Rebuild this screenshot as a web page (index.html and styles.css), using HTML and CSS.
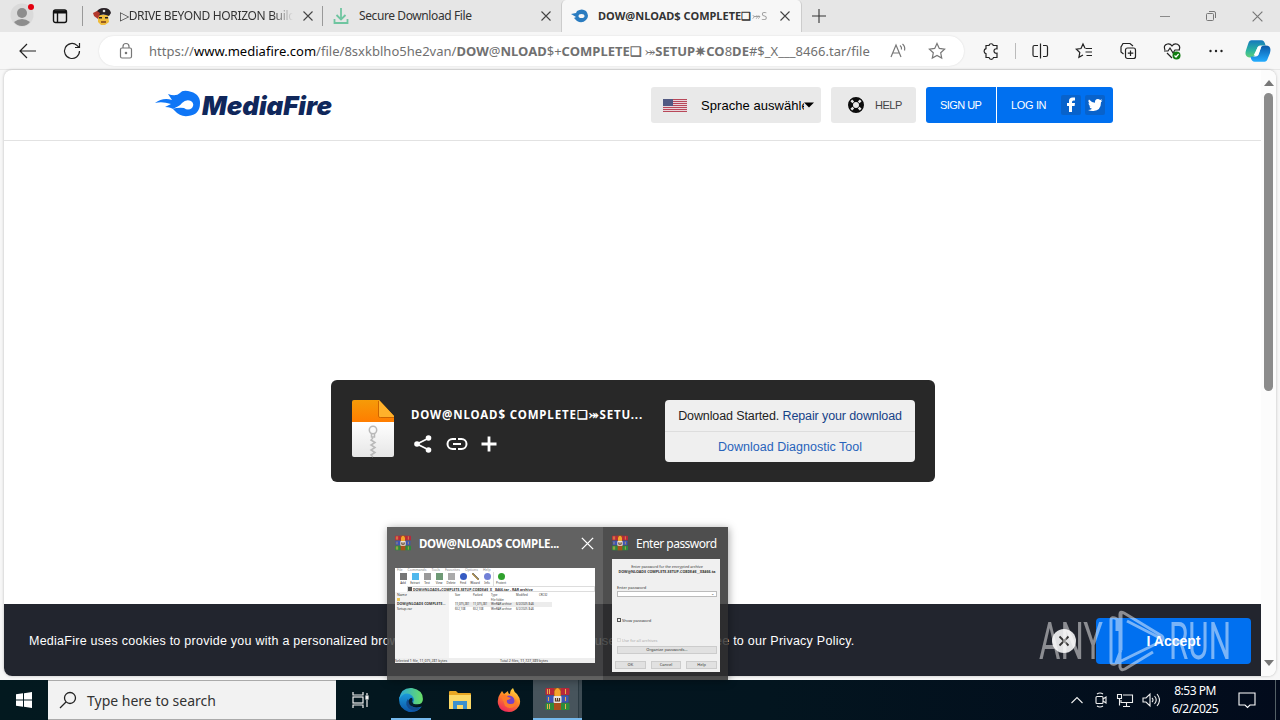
FILE: index.html
```html
<!DOCTYPE html>
<html lang="en">
<head>
    <meta charset="UTF-8">
    <meta name="viewport" content="width=device-width, initial-scale=1.0">
    <title>MediaFire</title>
    <link rel="stylesheet" href="styles.css">
</head>
<body>
    <!-- Shared icons -->
    <svg class="sprite" width="0" height="0">
        <symbol id="winrar" viewBox="0 0 24 24">
            <rect x="0" y="1" width="24" height="7" rx="1" fill="#b8283b"/>
            <rect x="1" y="8.500" width="22" height="7" rx="1" fill="#3d55b5"/>
            <rect x="0" y="16" width="24" height="7" rx="1" fill="#2c8b3c"/>
            <path d="M2 2v5M4 2v5M20 2v5M3 10v4M20 10v4M2 17v5M4 17v5M20 17v5" stroke="#e8b04a" stroke-width="1"/>
            <rect x="8.500" y="1" width="7" height="22" fill="#a9501c"/>
            <path d="M9 9V4q3-6 6 0v5" fill="#f5a52a"/>
            <rect x="8" y="9" width="8" height="7" rx="1" fill="#e9e4dc"/>
            <path d="M10 11v3h4v-3M12 11v3" fill="none" stroke="#5a3a22" stroke-width="1.2"/>
        </symbol>
        <symbol id="close" viewBox="0 0 12 12">
            <path d="M1.500 1.500l9 9M10.500 1.500l-9 9" fill="none" stroke="currentColor" stroke-width="1.1"/>
        </symbol>
    </svg>

    <div class="browser">
        <div class="tabs">
            <div class="profile">
                <svg width="24" height="28" viewBox="0 0 24 28">
                    <circle cx="12" cy="15" r="11.500" fill="#dadada"/>
                    <circle cx="12" cy="13" r="5" fill="#8d8d8d"/>
                    <path d="M4 22q8-6 16 0q-3 4-8 4t-8-4" fill="#8d8d8d"/>
                    <circle cx="21" cy="7" r="3" fill="#e3000f"/>
                </svg>
            </div>
            <div class="tab-actions">
                <svg width="16" height="16" viewBox="0 0 16 16" fill="none" stroke="#111" stroke-width="1.4">
                    <rect x="1.500" y="2" width="13" height="12.500" rx="2"/>
                    <path d="M2 4h12" stroke-width="3"/>
                    <path d="M5.500 4v10"/>
                </svg>
            </div>
            <div class="tab tab-first">
                <svg class="favicon" width="18" height="18" viewBox="0 0 18 18">
                    <path d="M5 8h10l1 7-4 3H8l-3-3z" fill="#efbc3c"/>
                    <path d="M3 6q2-5 8-5t7 5l-2 3q-6-3-11 0z" fill="#282025"/>
                    <path d="M0 6l4-2 3 2-2 6-4-3z" fill="#b3392d"/>
                    <path d="M6 10h3v1.500H6zM12 10h3v1.500h-3z" fill="#29211c"/>
                    <path d="M8 15h5" stroke="#7a3e19" stroke-width="1.500"/>
                    <circle cx="11" cy="4" r="1.300" fill="#ddd"/>
                </svg>
                <span class="tab-title t1">▷DRIVE BEYOND HORIZON Build</span>
                <svg class="tab-close" width="12" height="12"><use href="#close"/></svg>
            </div>
            <div class="tab tab-second">
                <svg class="favicon" width="16" height="18" viewBox="0 0 16 18" fill="none" stroke="#6fc5a0" stroke-width="1.8">
                    <path d="M8 1v11M3.500 8L8 12.500 12.500 8M1.500 12v4h13v-4"/>
                </svg>
                <span class="tab-title t2">Secure Download File</span>
                <svg class="tab-close" width="12" height="12"><use href="#close"/></svg>
            </div>
            <div class="tab active">
                <svg class="favicon" width="18" height="14" viewBox="0 0 18 14">
                    <path d="M0 5l5-1 1-2q5-3 9 0 4 5 0 9-4 4-9 1l-3-3 2-1z" fill="#2b7cc0"/>
                    <ellipse cx="10.500" cy="7" rx="3" ry="2" fill="#f7f7f7"/>
                </svg>
                <span class="tab-title t3">DOW@NLOAD$ COMPLETE❏ <i>⤖S</i></span>
                <svg class="tab-close" width="12" height="12"><use href="#close"/></svg>
            </div>
            <svg class="new-tab" width="14" height="14" viewBox="0 0 14 14"><path d="M7 0v14M0 7h14" stroke="#333" stroke-width="1.1"/></svg>
            <div class="window-buttons">
                <svg width="12" height="12" viewBox="0 0 12 12"><path d="M1 6.500h10" stroke="#8a8a8a"/></svg>
                <svg width="12" height="12" viewBox="0 0 12 12" fill="none" stroke="#777"><rect x="1.500" y="3.500" width="7" height="7" rx="1"/><path d="M4 1.500h5q1.500 0 1.500 1.500v5"/></svg>
                <svg width="13" height="13"><use href="#close"/></svg>
            </div>
        </div>

        <div class="toolbar">
            <div class="tool">
                <svg width="20" height="20" viewBox="0 0 20 20"><path d="M18 10H2.500M9 3l-7 7 7 7"/></svg>
            </div>
            <div class="tool">
                <svg width="20" height="20" viewBox="0 0 20 20"><path d="M17.500 10a7.500 7.500 0 1 1-2.500-5.600l2 2M17.500 2v4.500H13"/></svg>
            </div>
            <div class="address">
                <svg class="lock" width="14" height="18" viewBox="0 0 14 18"><rect x="1.500" y="6" width="11" height="10" rx="1.500"/><path d="M4 6V4.500a3 3 0 0 1 6 0V6"/><circle cx="7" cy="11" r=".7"/></svg>
                <span class="url">https://<span class="host">www.mediafire.com</span>/file/8sxkblho5he2van/<b>DOW</b>@<b>NLOAD</b>$+<b>COMPLETE❏</b> ⤖<b>SETUP✷CO</b>8<b>DE</b>#$_X___8466.tar/file</span>
                <div class="address-icons">
                    <svg width="18" height="18" viewBox="0 0 18 18"><path d="M2 15L7 3l5 12M3.700 11h6.600M11 3.500q2 1.500 1.500 4M13.500 2q3 2.500 2 6.500"/></svg>
                    <svg width="18" height="18" viewBox="0 0 18 18"><path d="M9 1.500l2.300 4.900 5.300.7-3.900 3.700 1 5.300L9 13.500l-4.700 2.600 1-5.300L1.400 7.100l5.300-.7z"/></svg>
                </div>
            </div>
            <div class="tool puzzle">
                <svg width="18" height="18" viewBox="0 0 18 18"><path d="M4 3.500h3a2.200 2.200 0 0 1 4.300 0H15v3.300q-3-.3-3 2.200t3 2.200v4.300h-3.500a2.300 2.300 0 0 1-4.500 0H4v-3.800a2.600 2.600 0 0 1 0-5z"/></svg>
            </div>
            <div class="tool split">
                <svg width="18" height="18" viewBox="0 0 18 18"><path d="M7 3.500H3.500a1.500 1.500 0 0 0-1.500 1.500v8a1.500 1.500 0 0 0 1.500 1.500H7M9.500 1.500v15M12 3.500h3a1.500 1.500 0 0 1 1.500 1.500v8a1.500 1.500 0 0 1-1.500 1.500h-3"/></svg>
            </div>
            <div class="tool">
                <svg width="18" height="18" viewBox="0 0 18 18"><path d="M10 6.200L8 2 6 6.500l-4.700.6 3.500 3.400-.9 4.800L8 13M10.500 6.500H17M10.500 10H17M11.500 13.500H17"/></svg>
            </div>
            <div class="tool">
                <svg width="18" height="18" viewBox="0 0 18 18"><rect x="6.500" y="6" width="10" height="10.500" rx="2"/><path d="M11.500 8.500v5.500M8.800 11.200h5.500M4.500 12L2 10V5l2-3.500h7L14 4"/></svg>
            </div>
            <div class="tool">
                <svg width="18" height="18" viewBox="0 0 18 18"><path d="M2 8Q0 3 4.500 2 7.500 1.500 9 4q2-3 5.500-1.800Q18 4 16 8M4 11l5 5M1 9h4l2-3 3 5 2-3h5"/><circle cx="13.500" cy="13.500" r="4" fill="#107c10" stroke="none"/><path d="M11.500 13.500l1.500 1.500 2.600-3" stroke="#fff"/></svg>
            </div>
            <div class="tool">
                <svg width="18" height="18" viewBox="0 0 18 18"><g class="dots"><circle cx="3.500" cy="9" r="1.200"/><circle cx="9" cy="9" r="1.200"/><circle cx="14.500" cy="9" r="1.200"/></g></svg>
            </div>
            <div class="tool copilot">
                <svg width="26" height="26" viewBox="0 0 24 24">
                    <defs>
                        <linearGradient id="cp1" x2="0" y2="1"><stop offset="0" stop-color="#1578bd"/><stop offset=".6" stop-color="#2cb5a0"/><stop offset="1" stop-color="#62cf78"/></linearGradient>
                        <linearGradient id="cp2" x2="0" y2="1"><stop offset="0" stop-color="#0b59a8"/><stop offset="1" stop-color="#24adff"/></linearGradient>
                    </defs>
                    <path d="M6 2h9q3 0 4 5h-5q-2 0-3 3l-2 6q-1 2-5 2-5-1-3-7l2-6q1-3 3-3z" fill="url(#cp1)"/>
                    <path d="M18 22H9q-3 0-4-5h5q2 0 3-3l2-6q1-1 4-1 6 0 4 7l-2 5q-1 3-3 3z" fill="url(#cp2)"/>
                    <path d="M12 8h3l-3 8H8z" fill="#fff"/>
                </svg>
            </div>
        </div>

        <div class="viewport">
            <div class="page">
                <header class="site-header">
                    <svg class="logo" width="180" height="30" viewBox="0 0 180 30">
                        <path d="M1 13q8-6 17-3l-4-6q8 3 12-1 2-3 8-2 12 2 12 12 0 12-12 13-8 1-13-5-3-4-10-4l6-3Q8 11 1 13z" fill="#0f76f6"/>
                        <path d="M17 19q8-2 11-6 4-4 9-2 4 3 1 7-4 3-8 0-4-1-13 1z" fill="#fff"/>
                        <text x="48" y="25" textLength="130" lengthAdjust="spacingAndGlyphs">MediaFire</text>
                    </svg>
                    <div class="language">
                        <svg width="24" height="13" viewBox="0 0 24 13">
                            <rect width="24" height="13" fill="#e8d5da"/>
                            <path d="M0 .5h24M0 2.500h24M0 4.500h24M0 6.500h24M0 8.500h24M0 10.500h24M0 12.500h24" stroke="#b84859"/>
                            <rect width="10" height="7" fill="#525a83"/>
                        </svg>
                        <span>Sprache auswählen</span>
                        <svg width="10" height="6" viewBox="0 0 10 6"><path d="M0 .5h10L5 5.500z"/></svg>
                    </div>
                    <div class="help">
                        <svg width="16" height="16" viewBox="0 0 16 16">
                            <circle cx="8" cy="8" r="5.500" fill="none" stroke="#0c0c0c" stroke-width="5"/>
                            <path d="M3.300 3.300l2 2M10.700 10.700l2 2M12.700 3.300l-2 2M5.300 10.700l-2 2" stroke="#e9e9e9" stroke-width="2.500"/>
                        </svg>
                        <span>HELP</span>
                    </div>
                    <div class="account">
                        <span class="signup">SIGN UP</span>
                        <span class="login">LOG IN</span>
                        <span class="social"><svg width="20" height="20" viewBox="0 0 20 20"><path d="M8 17v-6H6V8h2V6q0-3.500 3.500-3.500H14v3h-1.500Q11 5.500 11 7v1h3l-.4 3H11v6z" fill="#fff"/></svg></span>
                        <span class="social"><svg width="20" height="20" viewBox="0 0 20 20"><path d="M3 15q2.500 0 4-1.200-2.200-.3-2.700-2.300h1.200Q3.500 10.500 3.500 8l1.200.4Q2.500 6.500 4 4.500q2.500 3 6 3.200Q9.700 4 12.800 4q1.500 0 2.300 1l1.900-.8-1 1.800 1.500-.5-1.500 1.800Q16 15.500 8.500 16q-3 .3-5.500-1z" fill="#fff"/></svg></span>
                    </div>
                </header>

                <main>
                    <section class="file-card">
                        <svg class="file-icon" width="42" height="58" viewBox="0 0 42 58">
                            <defs>
                                <linearGradient id="orange" x2="0" y2="1"><stop stop-color="#f69b08"/><stop offset="1" stop-color="#ff7d00"/></linearGradient>
                                <linearGradient id="paper" x2="0" y2="1"><stop stop-color="#fff"/><stop offset="1" stop-color="#e6e6e6"/></linearGradient>
                            </defs>
                            <path d="M0 22h42v33q0 2-2 2H2q-2 0-2-2z" fill="url(#paper)"/>
                            <path d="M0 2q0-2 2-2h25l15 16v6H0z" fill="url(#orange)"/>
                            <path d="M27 0l15 16v1H28q-1 0-1-1z" fill="#ffb12b"/>
                            <path d="M26.500 1v15.500q0 1 2 1H42" fill="none" stroke="#cf6500"/>
                            <circle cx="21" cy="30" r="3.700" fill="none" stroke="#b9b9b9" stroke-width="1.500"/>
                            <path d="M19.500 33v4h3v-4M21 38l-2 2 4 2.500-4 2.500 4 2.500-4 2.500 4 2.500-4 2.500 2 2" fill="none" stroke="#b9b9b9" stroke-width="1.500"/>
                        </svg>
                        <div class="file-info">
                            <div class="file-name"><b>DOW@NLOAD$ COMPLETE❏⤖SETU...</b></div>
                            <div class="file-actions">
                                <svg width="20" height="20" viewBox="0 0 20 20" fill="#fff"><path d="M16 4L4 10l12 6" fill="none" stroke="#fff" stroke-width="1.800"/><circle cx="15.500" cy="4" r="2.800"/><circle cx="4" cy="10" r="2.800"/><circle cx="15.500" cy="16" r="2.800"/></svg>
                                <svg width="22" height="20" viewBox="0 0 22 20" fill="none" stroke="#fff" stroke-width="2"><path d="M10 5H6.500a5 5 0 0 0 0 10H10M12 5h3.500a5 5 0 0 1 0 10H12M7 10h8"/></svg>
                                <svg width="16" height="20" viewBox="0 0 16 20" stroke="#fff" stroke-width="2.800"><path d="M8 2.500v15M.5 10h15"/></svg>
                            </div>
                        </div>
                        <div class="download-box">
                            <p>Download Started. <a>Repair your download</a></p>
                            <p><a class="tool-link">Download Diagnostic Tool</a></p>
                        </div>
                    </section>
                </main>

                <footer class="cookies">
                    <p>MediaFire uses cookies to provide you with a personalized browsing experience. By continuing to use this site, you agree to our Privacy Policy.</p>
                    <svg class="dismiss" width="24" height="24" viewBox="0 0 24 24"><circle cx="12" cy="12" r="12" fill="#e1e2e4"/><path d="M7.500 7.500l9 9M16.500 7.500l-9 9" stroke="#333" stroke-width="1.800"/></svg>
                    <div class="accept">I Accept</div>
                </footer>
            </div>
            <div class="scrollbar">
                <svg width="10" height="6" viewBox="0 0 10 6"><path d="M0 6l5-6 5 6z"/></svg>
                <div class="thumb"></div>
                <svg width="10" height="6" viewBox="0 0 10 6"><path d="M0 0h10L5 6z"/></svg>
            </div>
        </div>
    </div>

    <div class="taskbar">
        <div class="start">
            <svg width="16" height="16" viewBox="0 0 16 16" fill="#fff"><path d="M0 2.300L7 1.300V7.500H0zM8 1.200L16 0v7.500H8zM0 8.500h7v6.200l-7-1zM8 8.500h8V16l-8-1.200z"/></svg>
        </div>
        <div class="search">
            <svg width="18" height="18" viewBox="0 0 18 18" fill="none" stroke="#222" stroke-width="1.300"><circle cx="11" cy="7" r="5.500"/><path d="M7 11l-6 6"/></svg>
            <span>Type here to search</span>
        </div>
        <div class="app task-view">
            <svg width="18" height="18" viewBox="0 0 18 18" fill="none" stroke="#f0f0f0" stroke-width="1.200"><path d="M2 1v3h10V1M2 17v-3h10v3M16 2v2M16 9v7"/><rect x="2" y="6" width="10" height="6"/><rect x="15" y="5" width="2" height="3" fill="#fff"/></svg>
        </div>
        <div class="app running">
            <svg width="26" height="26" viewBox="0 0 24 24">
                <defs>
                    <linearGradient id="e1"><stop stop-color="#2aa7dc"/><stop offset="1" stop-color="#69df65"/></linearGradient>
                    <linearGradient id="e2" x2="0" y2="1"><stop stop-color="#1ba0df"/><stop offset="1" stop-color="#0c55a8"/></linearGradient>
                </defs>
                <path d="M1 10Q4 3 12 5q6 2 5 8l-5 2q1 6 10 3-4 6-12 5Q1 20 1 12z" fill="url(#e2)"/>
                <path d="M1 11Q3 0 13 1q10 2 10 10 0 5-5 5-5 0-4-2 2-3-1-6Q7 3 1 11z" fill="url(#e1)"/>
                <path d="M9 11q-4 6 3 10 5 2 9-2-8 2-10-5z" fill="#134b8f"/>
                <path d="M10 12q-1 5 4 6l6-1q-6 0-7-3 1-2 0-4-2 0-3 2z" fill="#06202f"/>
            </svg>
        </div>
        <div class="app">
            <svg width="22" height="20" viewBox="0 0 22 20"><path d="M0 2q0-1 1-1h6l2 2h12q1 0 1 1v14H0z" fill="#e8a723"/><path d="M0 5h22v14H0z" fill="#fbd967"/><path d="M4 19v-8h14v8h-4v-4H8v4z" fill="#3c91ce"/></svg>
        </div>
        <div class="app">
            <svg width="24" height="24" viewBox="0 0 24 24">
                <defs><linearGradient id="ff" x1=".8" y1="0" x2=".3" y2="1"><stop stop-color="#ffe044"/><stop offset=".45" stop-color="#ff8b25"/><stop offset="1" stop-color="#ed255b"/></linearGradient></defs>
                <path d="M3 6l2-3 2 3 4-3q0 3 2 3 0-4 3-6 1 4 4 6 5 6 2 12-4 6-10 6-9 0-11-8-1-6 2-10z" fill="url(#ff)"/>
                <circle cx="12" cy="13" r="5.500" fill="#7642c5"/>
                <path d="M4 8q4-3 7 1l3 1q-2 2-4 2-1 4 4 4 5 0 4-5 3 3 0 7-5 4-10 0z" fill="#fe7b29"/>
            </svg>
        </div>
        <div class="app selected">
            <svg width="25" height="24"><use href="#winrar"/></svg>
        </div>
        <div class="tray">
            <svg width="12" height="18" viewBox="0 0 12 18"><path d="M.5 12L6 6.500l5.500 5.500"/></svg>
            <svg width="14" height="18" viewBox="0 0 14 18"><rect x="2" y="5.500" width="7" height="7" rx="1"/><path d="M9 8l3-2v6l-3-2M3 3q3-2 6 0M3 15q3 2 6 0"/></svg>
            <svg width="18" height="18" viewBox="0 0 18 18"><path d="M7 4h9.500v7.500H5V9M10.500 11.500V15M7 15.500h7M1.500 3.500h4v4h-4zM3.500 7.500v7"/></svg>
            <svg width="18" height="18" viewBox="0 0 18 18"><path d="M1 7h3l4-4v12l-4-4H1zM10 7q2 2 0 4M12.500 5q3.500 4 0 8M15 3q5 6 0 12"/></svg>
        </div>
        <div class="clock">
            <span>8:53 PM</span>
            <span>6/2/2025</span>
        </div>
        <svg class="notify" width="18" height="18" viewBox="0 0 18 18"><path d="M1 2h16v12h-5l-2.500 2.500L7 14H1z"/></svg>
        <div class="show-desktop"></div>
    </div>

    <!-- Taskbar window previews -->
    <div class="previews">
        <div class="preview hovered">
            <div class="preview-title">
                <svg width="16" height="16"><use href="#winrar"/></svg>
                <b>DOW@NLOAD$ COMPLE...</b>
                <svg class="preview-close" width="15" height="15"><use href="#close"/></svg>
            </div>
            <div class="archive">
                <div class="menu"><span>File</span><span>Commands</span><span>Tools</span><span>Favorites</span><span>Options</span><span>Help</span></div>
                <div class="buttons">
                    <span><i class="k1"></i>Add</span><span><i class="k2"></i>Extract</span><span><i class="k3"></i>Test</span><span><i class="k4"></i>View</span><span><i class="k5"></i>Delete</span><span><i class="k6"></i>Find</span><span><i class="k7"></i>Wizard</span><span><i class="k8"></i>Info</span><span class="last"><i class="k9"></i>Protect</span>
                </div>
                <div class="path"><i></i><b>DOW@NLOAD$+COMPLETE-SETUP-CO8DE#$_X__8466.tar - RAR archive</b></div>
                <div class="files">
                    <div class="tree">Name<br><i></i><br><b>DOW@NLOAD$ COMPLETE...</b><br>Setup.rar</div>
                    <div class="list">
                        <div><span>Size</span><span>Packed</span><span>Type</span><span>Modified</span><span>CRC32</span></div>
                        <div><span></span><span></span><span>File folder</span><span></span><span></span></div>
                        <div class="row"><span>11,075,281</span><span>11,075,281</span><span>WinRAR archive</span><span>6/2/2025 8:46</span><span></span></div>
                        <div><span>652,108</span><span>652,108</span><span>WinRAR archive</span><span>6/2/2025 8:46</span><span></span></div>
                    </div>
                </div>
                <div class="status"><span>Selected 1 file, 11,075,281 bytes</span><span>Total 2 files, 11,727,389 bytes</span></div>
            </div>
        </div>
        <div class="preview">
            <div class="preview-title">
                <svg width="16" height="16"><use href="#winrar"/></svg>
                <span>Enter password</span>
            </div>
            <div class="dialog">
                <p class="message">Enter password for the encrypted archive<br><b>DOW@NLOAD$ COMPLETE-SETUP-CO8DE#$__X8466.ta</b></p>
                <p class="label">Enter password</p>
                <div class="field">⌄</div>
                <p class="check"><i></i>Show password</p>
                <p class="check all"><i></i>Use for all archives</p>
                <div class="organize">Organize passwords...</div>
                <div class="answers"><span>OK</span><span>Cancel</span><span>Help</span></div>
            </div>
        </div>
    </div>

    <svg class="watermark" width="196" height="64" viewBox="0 0 196 64">
        <text x="1" y="50" textLength="64" lengthAdjust="spacingAndGlyphs">ANY</text>
        <path d="M79 22V10q-6-3-6 1v42q0 3 4 2l47-23q2-3 0-5L86 4q-4-2-4 1v53q1 4 5 2l28-17M83 41V4M89 12l33 17M83 41l-5 13"/>
        <text x="131" y="50" textLength="62" lengthAdjust="spacingAndGlyphs">RUN</text>
    </svg>
</body>
</html>
```
FILE: styles.css
```css
:root {
    --blue: #0070f0;
    --grey: #e9e9e9;
    --dark: #282828;
}

* {
    box-sizing: border-box;
    margin: 0;
    padding: 0;
}

body {
    width: 1280px;
    height: 720px;
    overflow: hidden;
    position: relative;
    display: flex;
    flex-direction: column;
    font-family: "Liberation Sans", Arial, sans-serif;
    background-color: #f7f7f7;
    color: #222;
}

svg {
    flex-shrink: 0;
}

.sprite {
    position: absolute;
}

.browser {
    height: 680px;
    display: flex;
    flex-direction: column;
}

/* Tabs */
.tabs {
    height: 32px;
    display: flex;
    align-items: center;
    background-color: #e6e6e6;
    font-family: "Noto Sans", sans-serif;
    font-size: 12px;
    color: #333;
}

.profile {
    width: 44px;
    padding-left: 10px;
}

.tab-actions {
    width: 39px;
    padding-left: 8px;
    border-right: 1px solid #999;
    height: 20px;
    display: flex;
    align-items: center;
}

.tab {
    height: 32px;
    display: flex;
    align-items: center;
    position: relative;
}

.tab-first {
    width: 240px;
    padding: 0 9px 0 10px;
}

.tab-first::after {
    content: "";
    width: 1px;
    height: 20px;
    background-color: #999;
    position: absolute;
    right: 0;
    top: 6px;
}

.tab-second {
    width: 238px;
    padding: 0 9px 0 10px;
}

.tab.active {
    width: 241px;
    padding: 0 10px 0 9px;
    background-color: #f7f7f7;
    border-left: 1px solid #ccc;
    border-right: 1px solid #ccc;
    border-radius: 5px 5px 0 0;
}

.tab-title {
    flex: 1;
    margin-left: 9px;
    overflow: hidden;
    white-space: nowrap;
    position: relative;
    top: -1px;
}

.t1 {
    letter-spacing: -0.35px;
    margin-right: 9px;
    -webkit-mask-image: linear-gradient(to right, #000 88%, transparent);
    mask-image: linear-gradient(to right, #000 88%, transparent);
}

.t2 {
    letter-spacing: -0.4px;
    margin-left: 10px;
}

.t3 {
    font-size: 11px;
    font-weight: bold;
    letter-spacing: 0.02px;
    margin-right: 7px;
}

.t3 i {
    font-style: normal;
    font-weight: normal;
    opacity: 0.45;
    margin-left: -2px;
}

.tab-close {
    color: #444;
}

.new-tab {
    margin-left: 10px;
}

.window-buttons {
    margin-left: auto;
    display: flex;
    gap: 34px;
    padding-right: 16px;
    color: #777;
}

/* Toolbar */
.toolbar {
    height: 38px;
    padding-left: 6px;
    display: flex;
    align-items: center;
    border-bottom: 1px solid #e6e6e6;
}

.toolbar svg {
    fill: none;
    stroke: #222;
    stroke-width: 1.2;
}

.tool {
    width: 44px;
    display: flex;
    justify-content: center;
}

.address {
    width: 865px;
    height: 30px;
    margin: 0 5px;
    padding: 0 18px 0 20px;
    display: flex;
    align-items: center;
    background-color: #fff;
    border-radius: 15px;
    box-shadow: 0 0 2px rgba(0, 0, 0, 0.12);
}

.address svg {
    stroke: #777;
}

.url {
    width: 735px;
    margin-left: 16px;
    white-space: nowrap;
    font-family: "Noto Sans", sans-serif;
    font-size: 13px;
    letter-spacing: 0.02px;
    color: #707070;
}

.host {
    color: #000;
}

.address-icons {
    display: flex;
    gap: 21px;
    margin-left: 6px;
}

.puzzle {
    margin-right: 5px;
    position: relative;
}

.puzzle::after {
    content: "";
    width: 1px;
    height: 16px;
    background-color: #bbb;
    position: absolute;
    right: -3px;
    top: 1px;
}

.toolbar .dots {
    fill: #222;
    stroke: none;
}

.tool.copilot {
    width: 40px;
}

.copilot svg {
    stroke: none;
}

/* Page */
.viewport {
    height: 606px;
    margin: 0 4px 4px;
    display: flex;
    background-color: #fff;
    border-radius: 8px;
    box-shadow: 0 0 3px rgba(0, 0, 0, 0.25);
    overflow: hidden;
}

.page {
    width: 1257px;
    display: flex;
    flex-direction: column;
}

.scrollbar {
    width: 15px;
    display: flex;
    flex-direction: column;
    align-items: center;
    padding: 10px 0;
    background-color: #fcfcfc;
    fill: #777;
}

.thumb {
    width: 9px;
    height: 298px;
    margin: 7px 0 auto;
    border-radius: 5px;
    background-color: #8b8b8b;
}

.site-header {
    height: 71px;
    padding-left: 150px;
    display: flex;
    align-items: center;
    border-bottom: 1px solid #e2e2e2;
    font-size: 11px;
}

.logo text {
    font-family: Inter, sans-serif;
    font-size: 26px;
    font-weight: 900;
    font-style: italic;
    fill: #10275b;
}

.language,
.help,
.account {
    height: 36px;
    display: flex;
    align-items: center;
    border-radius: 3px;
    background-color: var(--grey);
}

.language {
    width: 170px;
    margin-left: 317px;
    padding-left: 12px;
    font-size: 13px;
    color: #000;
}

.language span {
    width: 103px;
    margin-left: 14px;
    overflow: hidden;
    white-space: nowrap;
    letter-spacing: 0.05px;
}

.help {
    width: 85px;
    margin: 0 10px;
    padding-left: 17px;
    gap: 11px;
    color: #444;
    letter-spacing: -0.5px;
}

.account {
    width: 187px;
    background-color: var(--blue);
    color: #fff;
    letter-spacing: -0.55px;
}

.signup {
    width: 71px;
    line-height: 36px;
    padding-left: 14px;
    border-right: 1px solid #fff;
}

.login {
    width: 64px;
    padding-left: 14px;
    letter-spacing: -0.35px;
}

.social {
    width: 20px;
    height: 20px;
    margin-right: 4px;
    border-radius: 2px;
    background-color: #0862cb;
}

main {
    height: 463px;
    padding: 239px 0 0 327px;
}

.file-card {
    width: 604px;
    height: 102px;
    padding: 20px 20px 20px 21px;
    display: flex;
    background-color: var(--dark);
    border-radius: 6px;
    color: #fff;
}

.file-info {
    width: 235px;
    margin: 5px 19px 0 17px;
}

.file-name {
    height: 20px;
    font-family: "Noto Sans", sans-serif;
    font-size: 11.5px;
    line-height: 20px;
    white-space: nowrap;
    letter-spacing: 0.86px;
}

.file-actions {
    display: flex;
    gap: 13px;
    margin: 9px 0 0 2px;
}

.download-box {
    width: 250px;
    height: 62px;
    background-color: #efefef;
    border-radius: 4px;
    text-align: center;
    font-size: 12.5px;
    letter-spacing: -0.11px;
    color: #222;
}

.download-box p {
    height: 31px;
    line-height: 32px;
}

.download-box p + p {
    border-top: 1px solid #ddd;
    line-height: 31px;
}

.download-box a {
    color: #164287;
}

.download-box .tool-link {
    color: #2863bb;
    letter-spacing: 0.02px;
}

.cookies {
    height: 72px;
    padding: 2px 10px 0 25px;
    display: flex;
    align-items: center;
    background-color: #22252e;
    color: #fff;
}

.cookies p {
    width: 1023px;
    font-size: 12.5px;
    white-space: nowrap;
    letter-spacing: 0.255px;
}

.accept {
    width: 155px;
    height: 46px;
    margin-left: 20px;
    border-radius: 4px;
    background-color: var(--blue);
    text-align: center;
    line-height: 46px;
    font-size: 14px;
    font-weight: bold;
}

/* Taskbar */
.taskbar {
    height: 40px;
    display: flex;
    align-items: center;
    background: linear-gradient(to right, #03191f, #03151f 60%, #020b1c);
    color: #fff;
}

.start {
    width: 48px;
    display: flex;
    justify-content: center;
}

.search {
    width: 288px;
    height: 40px;
    padding-left: 11px;
    display: flex;
    align-items: center;
    gap: 10px;
    background-color: #f2f2f2;
    border-top: 1px solid #aaa;
    border-bottom: 1px solid #aaa;
    font-family: "Noto Sans", sans-serif;
    font-size: 14px;
    color: #333;
}

.app {
    width: 49px;
    height: 40px;
    display: flex;
    align-items: center;
    justify-content: center;
}

.app.task-view {
    width: 50px;
    padding-right: 2px;
}

.app.running {
    background: linear-gradient(#76b9ed, #76b9ed) center bottom / 40px 2px no-repeat;
}

.app.selected {
    width: 49px;
    border-bottom: 2px solid #76b9ed;
    background: linear-gradient(to right, #47545c 45px, #17272f 45px, #3d4b53 46px);
}

.tray {
    margin-left: auto;
    display: flex;
    align-items: center;
    gap: 8px;
    fill: none;
    stroke: #eee;
    stroke-width: 1.1;
}

.tray svg:first-child {
    margin-right: 3px;
}

.clock {
    width: 54px;
    margin-left: 8px;
    display: flex;
    flex-direction: column;
    align-items: center;
    font-family: "Noto Sans", sans-serif;
    font-size: 12px;
    line-height: 18px;
    letter-spacing: -0.5px;
}

.notify {
    margin-left: 16px;
    fill: none;
    stroke: #fff;
    stroke-width: 1.1;
}

.show-desktop {
    width: 5px;
    height: 40px;
    margin-left: 19px;
    border-left: 1px solid #536066;
}

/* Window previews */
.previews {
    position: absolute;
    left: 387px;
    top: 527px;
    width: 341px;
    height: 153px;
    display: flex;
    font-family: "Noto Sans", sans-serif;
    box-shadow: 1px 1px 8px rgba(0, 0, 0, 0.35);
}

.preview {
    width: 125px;
    padding: 0 8px 0 9px;
    background-color: rgba(47, 47, 47, 0.85);
    color: #fff;
}

.preview.hovered {
    width: 216px;
    padding-left: 8px;
    background-color: rgba(70, 70, 70, 0.85);
}

.preview-title {
    height: 32px;
    display: flex;
    align-items: center;
    gap: 8px;
    font-size: 12px;
    letter-spacing: -0.5px;
    white-space: nowrap;
}

.preview-title b {
    font-size: 11.5px;
    letter-spacing: -0.3px;
}

.preview-close {
    margin-left: auto;
}

.archive,
.dialog {
    color: #333;
    font-size: 3.5px;
    line-height: 5px;
    white-space: nowrap;
    overflow: hidden;
}

.archive {
    height: 95px;
    margin-top: 9px;
    display: flex;
    flex-direction: column;
    background-color: #fff;
}

.menu {
    display: flex;
    gap: 5px;
    padding-left: 2px;
    height: 4px;
    line-height: 4px;
    color: #888;
}

.buttons {
    display: flex;
    height: 14px;
    padding-left: 2px;
    font-size: 3px;
    line-height: 4px;
}

.buttons span {
    width: 12px;
    text-align: center;
}

.buttons .last {
    width: 15px;
    border-left: 1px solid #ddd;
}

.buttons i {
    display: block;
    width: 7px;
    height: 7px;
    margin: 1px auto;
    background-color: #777;
}

.buttons .k2 { background-color: #50b8ed; }
.buttons .k3 { background-color: #9a9a9a; }
.buttons .k4 { background-color: #6f9a76; }
.buttons .k5 { background-color: #aaa; }
.buttons .k6 { background-color: #365cc3; border-radius: 50%; }
.buttons .k7 { background: linear-gradient(45deg, transparent 40%, #c9a04a 40%, #777 60%, transparent 60%); }
.buttons .k8 { background-color: #7180d6; border-radius: 50%; }
.buttons .k9 { background-color: #2fa12d; border-radius: 50%; }

.path {
    height: 6px;
    margin-left: 12px;
    display: flex;
    gap: 1px;
    border: 0.5px solid #ddd;
    overflow: hidden;
}

.path i {
    width: 4px;
    height: 4px;
    background-color: #555;
}

.files {
    flex: 1;
    display: flex;
    line-height: 4.5px;
}

.tree {
    width: 54px;
    padding: 1px 2px;
    overflow: hidden;
    background-color: #f3f3f3;
}

.tree i {
    display: inline-block;
    width: 3px;
    height: 3px;
    background-color: #ebc75d;
}

.list {
    flex: 1;
    padding: 1px 0 0 6px;
    font-size: 2.8px;
}

.list div {
    width: 97px;
    height: 4.5px;
    display: grid;
    grid-template-columns: 18px 18px 25px 23px 13px;
}

.list .row {
    background-color: #ececec;
}

.status {
    height: 5px;
    display: grid;
    grid-template-columns: 105px 1fr;
    background-color: #eee;
}

.dialog {
    width: 108px;
    height: 113px;
    padding: 5px 3px 0 5px;
    font-size: 4px;
    background-color: #f0f0f0;
}

.message {
    text-align: center;
    font-size: 3.7px;
}

.label {
    margin-top: 11px;
}

.field {
    height: 6px;
    margin-top: 1px;
    padding-right: 2px;
    border: 0.5px solid #bbb;
    background-color: #fff;
    text-align: right;
    line-height: 3px;
}

.check {
    margin-top: 21px;
    display: flex;
    gap: 1px;
}

.check i {
    width: 4px;
    height: 4px;
    border: 0.5px solid #555;
}

.check.all {
    margin-top: 15px;
    color: #aaa;
}

.check.all i {
    border-color: #ddd;
}

.organize {
    height: 8px;
    margin-top: 3px;
    border: 1px solid #ccc;
    background-color: #e1e1e1;
    text-align: center;
}

.answers {
    margin-top: 7px;
    display: flex;
    gap: 5px;
    margin-left: -2px;
}

.answers span {
    width: 31px;
    height: 8px;
    border: 1px solid #ccc;
    background-color: #e1e1e1;
    text-align: center;
}

.watermark {
    position: absolute;
    left: 1038px;
    top: 609px;
    opacity: 0.48;
}

.watermark text {
    font-family: Roboto, sans-serif;
    font-size: 52px;
    font-weight: 400;
    fill: #fff;
}

.watermark path {
    fill: none;
    stroke: #fff;
    stroke-width: 3;
    stroke-linejoin: round;
}
```
